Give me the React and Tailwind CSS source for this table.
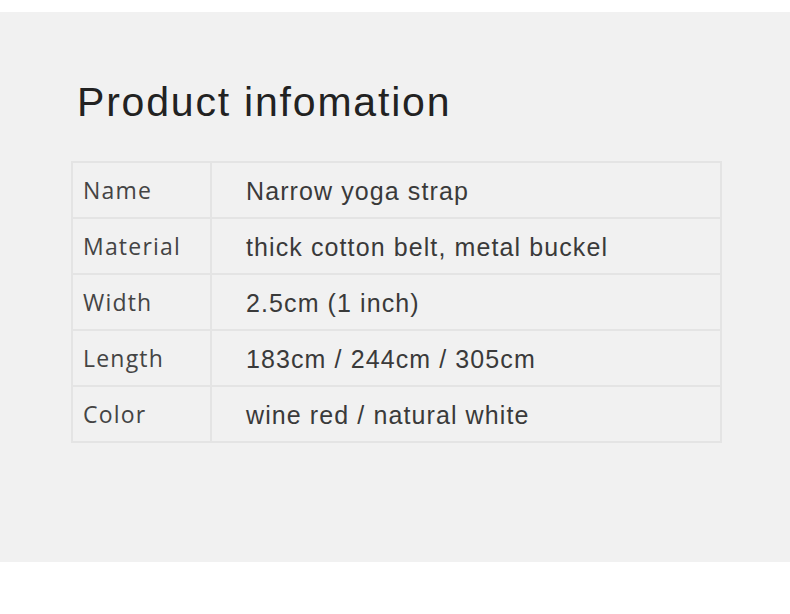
import React from 'react';

const rows = [
  ['Name', 'Narrow yoga strap'],
  ['Material', 'thick cotton belt, metal buckel'],
  ['Width', '2.5cm (1 inch)'],
  ['Length', '183cm / 244cm / 305cm'],
  ['Color', 'wine red / natural white'],
];

export default function App() {
  return (
    <div className="w-[790px] h-[614px] bg-white pt-[12px]">
      <section className="h-[550px] bg-[#f1f1f1] pt-[66px] px-[71px]">
        {/* Title */}
        <h1 className="pl-[6px] text-[41px] leading-[48px] text-[#222] font-['Liberation_Sans',Arial,sans-serif] tracking-[1.8px]">
          Product infomation
        </h1>

        {/* Spec table */}
        <div className="mt-[35px] w-[651px] border-t-2 border-l-2 border-[#e4e4e4]">
          {rows.map(([label, value]) => (
            <div key={label} className="flex h-[56px] border-b-2 border-[#e4e4e4]">
              <div className="w-[139px] border-r-2 border-[#e4e4e4] flex items-center pl-[10px] text-[23px] text-[#444] font-['Open_Sans','Noto_Sans',sans-serif] tracking-[1.2px]">
                {label}
              </div>
              <div className="flex-1 border-r-2 border-[#e4e4e4] flex items-center pl-[34px] pt-[3px] text-[25px] text-[#3a3a3a] font-['Liberation_Sans',Arial,sans-serif] tracking-[1.1px]">
                {value}
              </div>
            </div>
          ))}
        </div>
      </section>
    </div>
  );
}
